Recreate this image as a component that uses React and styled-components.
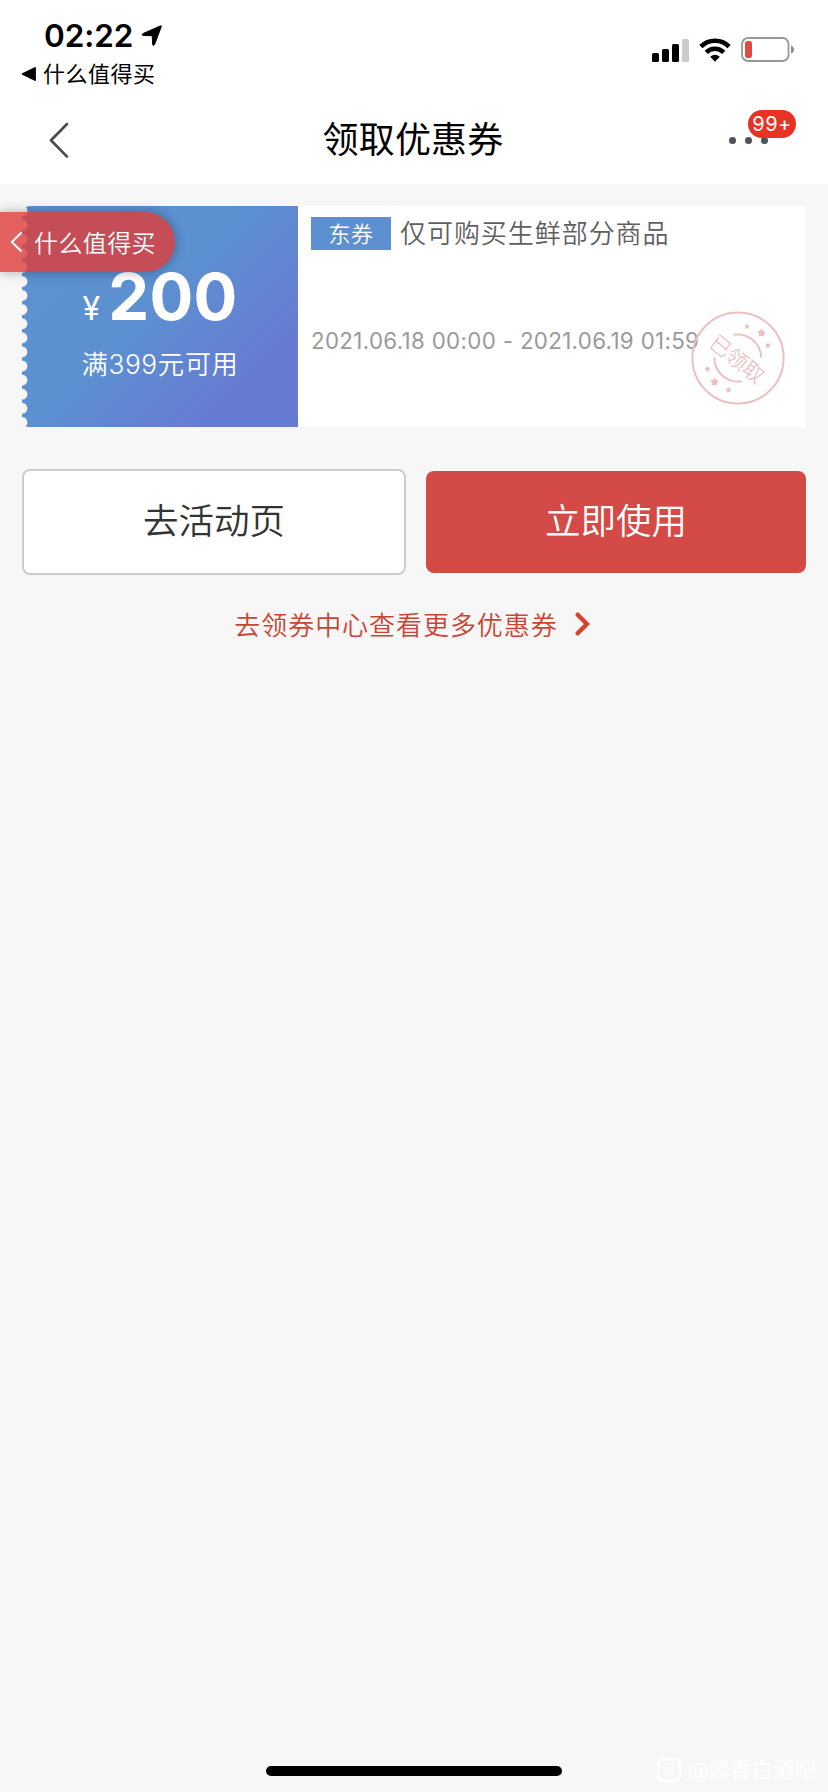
/**
 * Coupon page, shown after the user has received a coupon
 */
import React from "react";
import styled, { createGlobalStyle } from "styled-components";

const RED = "#d44a46";

export default function App() {
    return <>
        <GlobalStyle />
        <Page>
            <Header>
                <StatusBar>
                    <StatusLeft>
                        <Time>
                            02:22
                            <svg width="22" height="22" viewBox="0 0 22 22">
                                <path d="M20.3 1.6 L13.6 19.4 Q12.2 21.6 11.6 19.2 L11.3 11.5 Q11.2 10.8 10.4 10.7 L2.1 10.4 Q0 9.8 2 8.6 L19.3 1 Q20.8 .5 20.3 1.6Z" fill="#000" stroke="#000" strokeLinejoin="round" />
                            </svg>
                        </Time>
                        <ReturnLink>
                            <svg width="16" height="16" viewBox="0 0 16 16">
                                <path d="M1.6 8 L14 2 V14Z" fill="#000" stroke="#000" strokeWidth="1.8" strokeLinejoin="round" />
                            </svg>
                            <span>什么值得买</span>
                        </ReturnLink>
                    </StatusLeft>
                    <StatusIcons />
                </StatusBar>
                <NavBar>
                    <svg width="22" height="38" viewBox="0 0 22 38">
                        <path d="M19 3 L3 19.3 L19 35.6" fill="none" stroke="#4b4c53" strokeWidth="2.7" strokeLinecap="round" strokeLinejoin="round" />
                    </svg>
                    <NavTitle>领取优惠券</NavTitle>
                    <More>
                        <Dot /><Dot /><Dot />
                        <Badge>99+</Badge>
                    </More>
                </NavBar>
            </Header>

            <Content>
                <Coupon>
                    <CouponValue>
                        <Amount>
                            <Currency>¥</Currency>
                            200
                        </Amount>
                        <Condition>满399元可用</Condition>
                    </CouponValue>
                    <CouponInfo>
                        <InfoTitle>
                            <Tag>东券</Tag>
                            仅可购买生鲜部分商品
                        </InfoTitle>
                        <Validity>2021.06.18 00:00 - 2021.06.19 01:59</Validity>
                    </CouponInfo>
                    <ReturnTab>
                        <svg width="14" height="22" viewBox="0 0 14 22">
                            <path d="M11.5 1.5 L1.8 11 L11.5 20.5" fill="none" stroke="#fff" strokeWidth="2" />
                        </svg>
                        <span>什么值得买</span>
                    </ReturnTab>
                    <Stamp />
                </Coupon>

                <Actions>
                    <Button $outlined>去活动页</Button>
                    <Button>立即使用</Button>
                </Actions>

                <MoreLink>
                    <span>去领券中心查看更多优惠券</span>
                    <svg width="15" height="24" viewBox="0 0 15 24">
                        <path d="M2.7 2.7 L12 12 L2.7 21.3" fill="none" stroke="#d9412b" strokeWidth="4.4" strokeLinecap="round" />
                    </svg>
                </MoreLink>
            </Content>

            <Footer>
                <HomeIndicator />
                <Watermark>
                    <svg width="24" height="24" viewBox="0 0 24 24" fill="none" stroke="#fff" strokeWidth="2.4">
                        <rect x="1.2" y="1.2" width="21.6" height="21.6" rx="5" />
                        <path d="M8 7h8v8q-1 2-4 3-3-1-4-3zM9 10h6M9 13h6" strokeWidth=".8" />
                    </svg>
                    @酱香白酒吧
                </Watermark>
            </Footer>
        </Page>
    </>
}

function StatusIcons() {
    return (
        <StatusRight>
            <svg width="37" height="23" viewBox="0 0 37 23">
                <rect x="0" y="14" width="7" height="9" rx="1.6" />
                <rect x="10" y="10" width="7" height="13" rx="1.6" />
                <rect x="20" y="5" width="7" height="18" rx="1.6" />
                <rect x="30" y="0" width="7" height="23" rx="1.6" fill="#cbcbcb" />
            </svg>
            <svg width="32" height="24" viewBox="0 0 32 24" fill="none" stroke="#000" strokeWidth="4.6">
                <path d="M1.9 8.6 A20 20 0 0 1 30.1 8.6" />
                <path d="M7.3 14.4 A12.3 12.3 0 0 1 24.7 14.4" />
                <path d="M11.2 18.8 Q16 14.6 20.8 18.8 L16 23.8Z" fill="#000" stroke="none" />
            </svg>
            <svg width="54" height="25" viewBox="0 0 54 25">
                <rect x="1" y="1" width="46.5" height="23" rx="6" fill="none" stroke="#979797" strokeWidth="1.8" />
                <rect x="4" y="4" width="7" height="17" rx="2.5" fill="#dc4b3e" />
                <path d="M50 8.5 Q53 9.5 53 12.5 T50 16.5Z" fill="#8e8e8e" />
            </svg>
        </StatusRight>
    )
}

function Star({ x, y, r }) {
    const points = [];
    for (let i = 0; i < 10; i++) {
        const radius = i % 2 ? r * 0.6 : r;
        const angle = (i * Math.PI) / 5;
        points.push(`${x + radius * Math.sin(angle)},${y - radius * Math.cos(angle)}`);
    }
    return <polygon points={points.join(" ")} fill="#eebfc0" />
}

function Stamp() {
    return (
        <StampBox>
            <svg width="94" height="94" viewBox="-47 -47 94 94" fill="none" stroke="#ecc0c1" strokeWidth="2">
                <circle r="45.6" />
                <path d="M-4.5 -23.2 A23.6 23.6 0 0 1 23.2 -.5" />
                <path d="M-23.6 -.5 A23.6 23.6 0 0 0 4 23.2" />
                <g stroke="none">
                    <Star x={9} y={-31.5} r={2.8} />
                    <Star x={23.5} y={-25} r={4.4} />
                    <Star x={30} y={-12.5} r={3} />
                    <Star x={-30.5} y={11} r={3} />
                    <Star x={-23.5} y={24} r={4.4} />
                    <Star x={-9.5} y={32} r={3} />
                </g>
            </svg>
            <StampText>已领取</StampText>
        </StampBox>
    )
}


const GlobalStyle = createGlobalStyle`
    * { box-sizing: border-box; }

    body {
        margin: 0;
        background: #f7f7f7;
        font-family: Inter, "Noto Sans CJK SC", sans-serif;
    }

    svg {
        display: block;
        flex-shrink: 0;
    }
`

const Page = styled.div`
    width: 828px;
    height: 1792px;
    display: flex;
    flex-direction: column;
    overflow: hidden;
`

const Header = styled.header`
    height: 184px;
    background: #fff;
`

const StatusBar = styled.div`
    height: 94px;
    display: flex;
    justify-content: space-between;
    padding: 18px 33px 0 21px;
`

const StatusLeft = styled.div`
    display: flex;
    flex-direction: column;
`

const Time = styled.div`
    display: flex;
    align-items: center;
    gap: 8px;
    height: 35px;
    padding-left: 23px;
    font-size: 31.5px;
    font-weight: 600;
    letter-spacing: -0.1px;
`

const ReturnLink = styled.div`
    display: flex;
    align-items: center;
    gap: 6px;
    height: 41px;
    font-size: 22px;
    letter-spacing: 0.5px;

    span {
        margin-top: -4px;
    }
`

const StatusRight = styled.div`
    display: flex;
    align-items: flex-end;
    gap: 10px;
    height: 44px;
`

const NavBar = styled.div`
    position: relative;
    height: 90px;
    display: flex;
    align-items: center;
    justify-content: space-between;
    padding: 1px 60px 0 48px;
`

const NavTitle = styled.h1`
    margin: 0;
    font-size: 36px;
    font-weight: 400;
    line-height: 50px;
    letter-spacing: 0.2px;
    color: #000;
    transform: translateX(13.5px);
`

const More = styled.div`
    position: relative;
    display: flex;
    gap: 9px;
    padding-top: 2px;
`

const Dot = styled.span`
    width: 7px;
    height: 7px;
    border-radius: 50%;
    background: #50515a;
`

const Badge = styled.span`
    position: absolute;
    left: 19px;
    top: -25px;
    width: 48px;
    height: 28px;
    border-radius: 14px;
    background: #e63323;
    color: #fff;
    font-size: 20px;
    line-height: 28px;
    text-align: center;
    letter-spacing: 0.4px;
`

const Content = styled.main`
    flex: 1;
    padding: 22px 22px 0;
`

const Coupon = styled.section`
    position: relative;
    display: flex;
    height: 221px;
    background: #fff;
`

const CouponValue = styled.div`
    width: 276px;
    display: flex;
    flex-direction: column;
    align-items: center;
    padding: 58px 0 0 0;
    color: #fff;
    border-top-left-radius: 8px;
    border-bottom-left-radius: 6px;
    background:
        radial-gradient(circle at 0 7px, #f7f7f7 5px, transparent 5.8px) 0 -2px / 8px 14.1px repeat-y,
        linear-gradient(135deg, #5c92d2 0%, #5c90d1 45%, #667cd2 80%, #667cd2 100%);
`

const Amount = styled.div`
    display: flex;
    align-items: baseline;
    height: 66px;
    font-size: 65px;
    line-height: 66px;
    font-weight: 700;
    letter-spacing: 0.2px;
`

const Currency = styled.span`
    margin-right: 8px;
    font-size: 32px;
    font-weight: 400;
`

const Condition = styled.div`
    margin-top: 16px;
    font-size: 26.3px;
    font-weight: 350;
    line-height: 38px;
    letter-spacing: 0.6px;
`

const CouponInfo = styled.div`
    flex: 1;
    padding: 9px 0 0 13px;
`

const InfoTitle = styled.div`
    display: flex;
    align-items: center;
    gap: 9px;
    height: 37px;
    font-size: 26px;
    font-weight: 350;
    line-height: 34px;
    letter-spacing: 0.95px;
    color: #5f5f5f;
`

const Tag = styled.span`
    width: 80px;
    height: 33px;
    margin-top: -1px;
    background: #5c90d1;
    color: #fff;
    font-size: 22px;
    font-weight: 350;
    line-height: 35px;
    letter-spacing: 0.5px;
    text-align: center;
`

const Validity = styled.div`
    margin-top: 75px;
    font-size: 22.3px;
    line-height: 28px;
    letter-spacing: 0.34px;
    white-space: nowrap;
    color: #999;
`

/* floating tab that leads back to the previous app */
const ReturnTab = styled.div`
    position: absolute;
    left: -22px;
    top: 6px;
    width: 175px;
    height: 60px;
    display: flex;
    align-items: center;
    gap: 10px;
    padding-left: 10px;
    border-radius: 0 30px 30px 0;
    background: rgba(221, 62, 60, 0.82);
    box-shadow: 0 0 12px rgba(0, 0, 0, 0.32);
    color: #fff;
    font-size: 24px;
    font-weight: 350;
    letter-spacing: 0.4px;

    span {
        margin-top: -2px;
    }
`

const StampBox = styled.div`
    position: absolute;
    left: 668.5px;
    top: 105px;
    width: 94px;
    height: 94px;
`

const StampText = styled.span`
    position: absolute;
    inset: 0;
    display: flex;
    align-items: center;
    justify-content: center;
    color: #e9b4b6;
    font-size: 21px;
    font-weight: 300;
    transform: rotate(39deg);
`

const Actions = styled.div`
    display: flex;
    align-items: center;
    gap: 20px;
    margin-top: 42px;
`

const Button = styled.button`
    width: ${props => props.$outlined ? "384px" : "380px"};
    height: ${props => props.$outlined ? "106px" : "102px"};
    padding: 0 0 7px;
    border: ${props => props.$outlined ? "2px solid #ccc" : "none"};
    border-radius: 8px;
    background: ${props => props.$outlined ? "#fff" : RED};
    color: ${props => props.$outlined ? "#333" : "#fff"};
    font-family: inherit;
    font-size: 35.5px;
    font-weight: 350;
`

const MoreLink = styled.div`
    display: flex;
    align-items: center;
    justify-content: center;
    gap: 17px;
    height: 38px;
    margin-top: 30px;
    padding-right: 4px;
    font-size: 26px;
    font-weight: 350;
    letter-spacing: 0.95px;
    color: #cb4434;

    span {
        margin-top: -2px;
    }
`

const Footer = styled.footer`
    position: relative;
    height: 40px;
    display: flex;
    justify-content: center;
    padding-top: 14px;
`

const HomeIndicator = styled.div`
    width: 296px;
    height: 10px;
    border-radius: 5px;
    background: #000;
`

const Watermark = styled.div`
    position: absolute;
    right: 12px;
    top: 2px;
    height: 32px;
    display: flex;
    align-items: center;
    gap: 7px;
    font-size: 21.5px;
    line-height: 32px;
    color: #fff;
`
